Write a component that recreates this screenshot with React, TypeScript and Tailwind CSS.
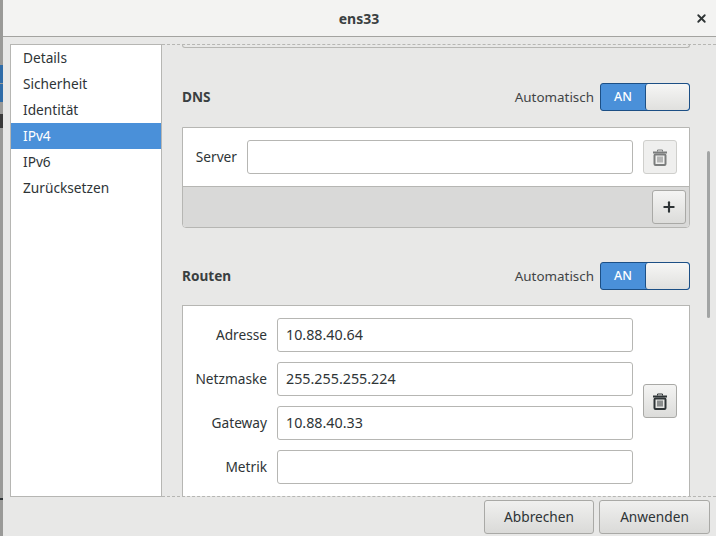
import { Plus, X } from "lucide-react";

function Trash({ disabled }: { disabled?: boolean }) {
  return (
    <svg width="16" height="17" viewBox="0 0 16 17" className={disabled ? "text-[#7b7d7d]" : "text-[#2e3436]"} fill="none" stroke="currentColor">
      <path d="M1 3.5h14" strokeWidth="2" />
      <path d="M5.5 2.5V1h5v1.5" strokeWidth="1" />
      <rect x="2.5" y="5.5" width="11" height="10.5" rx="1" strokeWidth="2" />
      <path d="M6 7.5v6M8 7.5v6M10 7.5v6" strokeWidth="1" />
    </svg>
  );
}

function Switch() {
  return (
    <div className="flex h-7 w-[90px] overflow-hidden rounded-[3px] border border-[#1c4f85] bg-[#4a90d9]">
      <div className="flex w-11 items-center justify-center text-[12.5px] font-medium text-white">AN</div>
      <div className="flex-1 rounded-[3px] border-l border-[#1c4f85] bg-gradient-to-b from-[#f6f6f5] to-[#e0e0de]" />
    </div>
  );
}

function Section({ title }: { title: string }) {
  return (
    <div className="flex h-7 items-center justify-between">
      <span className="text-[13.6px] font-bold text-[#3a3f41]">{title}</span>
      <div className="flex items-center gap-[6px]">
        <span className="text-[13.4px] text-[#3f4446]">Automatisch</span>
        <Switch />
      </div>
    </div>
  );
}

function Field({ label, value, labelWidth }: { label: string; value?: string; labelWidth: string }) {
  return (
    <div className="flex flex-1 items-center gap-[10px]">
      <span className={`${labelWidth} shrink-0 text-right text-[#2e3436]`}>{label}</span>
      <div className="flex h-[34px] flex-1 items-center rounded-[3px] border border-[#b6b6b3] bg-white px-2 text-[14.3px] text-[#2e3436]">{value}</div>
    </div>
  );
}

function IconButton({ children, className }: { children: React.ReactNode; className: string }) {
  return <div className={`flex h-[34px] w-[34px] items-center justify-center rounded-[3px] border ${className}`}>{children}</div>;
}

const navItems = ["Details", "Sicherheit", "Identität", "IPv4", "IPv6", "Zurücksetzen"];

export default function App() {
  return (
    <div className="flex h-[536px] w-[716px] overflow-hidden bg-[#8f9090] font-['Noto_Sans',sans-serif] text-[13.7px] text-[#2e3436]">
      {/* sliver of the desktop behind the dialog */}
      <div className="flex w-[3px] shrink-0 flex-col bg-[#9a9a98]">
        <div className="mt-[65px] h-[18px] bg-[#2f6ca8]" />
        <div className="mt-[1px] h-[18px] bg-[#2f6ca8]" />
        <div className="mt-[12px] h-[14px] bg-[#3a3a3a]" />
        <div className="mt-[370px] h-[2px] bg-[#2e3436]" />
      </div>
      <div className="flex min-w-0 flex-1 flex-col rounded-tl-[6px] bg-[#e8e8e7]">
        <header className="flex h-[37px] shrink-0 items-center border-b border-[#a3a3a0] bg-[#f3f3f2] pr-[8px]">
          <div className="flex-1 pl-[20px] text-center text-[14px] font-bold text-[#3a3f41]">ens33</div>
          <X size={13} strokeWidth={3.4} className="text-[#2e3436]" />
        </header>

        <div className="flex min-h-0 flex-1 pl-[7px] pt-[7px]">
          <nav className="h-[453px] w-[152px] shrink-0 border border-[#b6b6b3] bg-white">
            {navItems.map((item) => (
              <div key={item} className={`flex h-[26px] items-center pl-3 pt-[1px] ${item === "IPv4" ? "bg-[#4a90d9] text-white" : "text-[#2e3436]"}`}>
                {item}
              </div>
            ))}
          </nav>

          <div className="relative h-[453px] w-[554px] overflow-hidden border-y border-dashed border-y-[#b6b6b3]">
            <div className="ml-5 h-[3px] w-[508px] rounded-b-[4px] border-x border-b border-[#b6b6b3]" />
            <div className="ml-5 mr-[26px] mt-[35px]">
              <Section title="DNS" />
              <div className="mt-[16px] overflow-hidden rounded-b-[4px] border border-[#b6b6b3] bg-white">
                <div className="flex h-[58px] items-center pl-3 pr-3">
                  <Field label="Server" labelWidth="w-[42px]" />
                  <IconButton className="ml-[10px] shrink-0 border-[#cfcfcc] bg-[#efefee]">
                    <Trash disabled />
                  </IconButton>
                </div>
                <div className="flex h-[41px] items-center justify-end border-t border-[#b6b6b3] bg-[#d9d9d8] pr-[3px]">
                  <IconButton className="border-[#a9a9a6] bg-gradient-to-b from-[#f4f4f3] to-[#dcdcda]">
                    <Plus size={16} strokeWidth={3.2} />
                  </IconButton>
                </div>
              </div>

              <div className="mt-[34px]">
                <Section title="Routen" />
              </div>
              <div className="mt-[15px] flex h-[220px] border border-[#b6b6b3] bg-white pl-3 pr-3 pt-3">
                <div className="flex flex-1 flex-col gap-[10px]">
                  <div className="flex"><Field label="Adresse" value="10.88.40.64" labelWidth="w-[72px]" /></div>
                  <div className="flex"><Field label="Netzmaske" value="255.255.255.224" labelWidth="w-[72px]" /></div>
                  <div className="flex"><Field label="Gateway" value="10.88.40.33" labelWidth="w-[72px]" /></div>
                  <div className="flex"><Field label="Metrik" labelWidth="w-[72px]" /></div>
                </div>
                <div className="ml-[10px] mt-[66px]">
                  <IconButton className="border-[#a9a9a6] bg-gradient-to-b from-[#f4f4f3] to-[#dcdcda]">
                    <Trash />
                  </IconButton>
                </div>
              </div>
            </div>
            <div className="absolute right-[6px] top-[106px] h-[167px] w-[3px] rounded-full bg-[#a2a4a4]" />
          </div>
        </div>

        <footer className="flex h-[39px] shrink-0 items-start justify-end gap-[5px] pr-[6px] pt-[3px]">
          <div className="flex h-[34px] w-[110px] items-center justify-center rounded-[3px] border border-[#a9a9a6] bg-gradient-to-b from-[#f0f0ef] to-[#dadad8]">Abbrechen</div>
          <div className="flex h-[34px] w-[111px] items-center justify-center rounded-[3px] border border-[#a9a9a6] bg-gradient-to-b from-[#f0f0ef] to-[#dadad8]">Anwenden</div>
        </footer>
      </div>
    </div>
  );
}
